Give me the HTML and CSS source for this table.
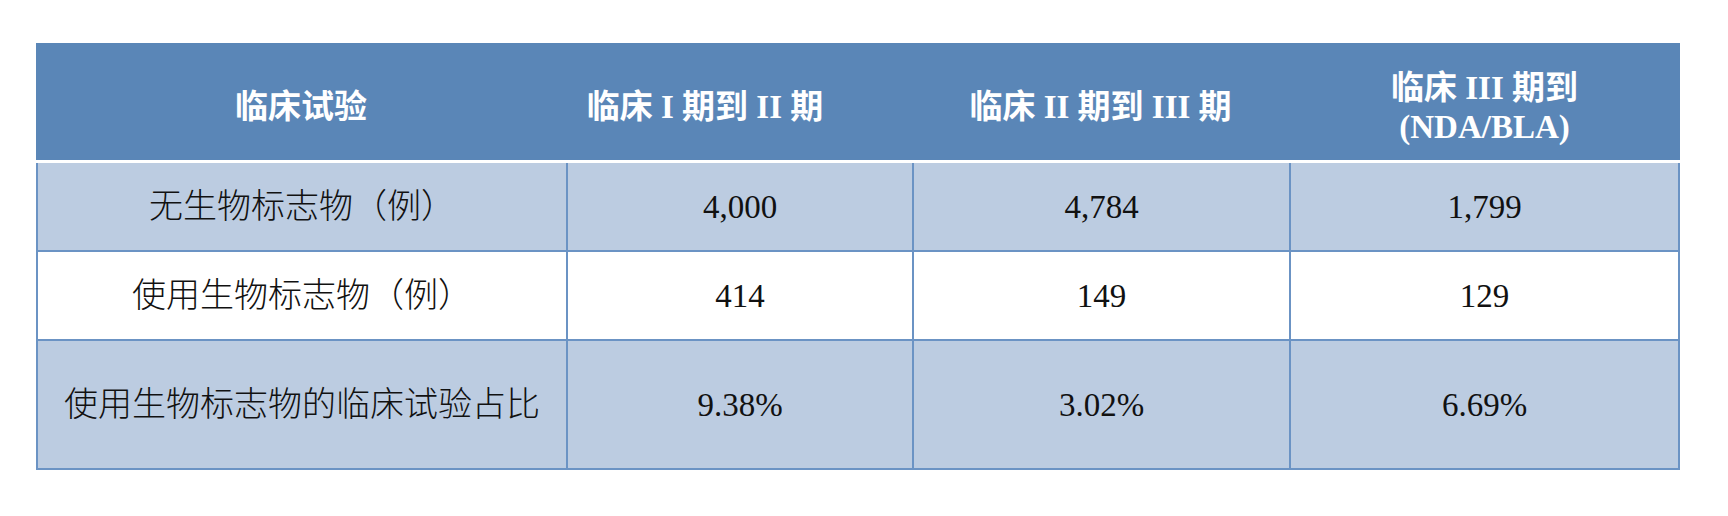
FILE: index.html
```html
<!DOCTYPE html>
<html lang="zh-CN">
<head>
<meta charset="utf-8">
<title>临床试验 生物标志物</title>
<link rel="stylesheet" href="styles.css">
</head>
<body>
<div class="table">
  <div class="head">
    <div class="hcell">临床试验</div>
    <div class="hcell shift">临床 I 期到 II 期</div>
    <div class="hcell">临床 II 期到 III 期</div>
    <div class="hcell two">临床 III 期到<br>(NDA/BLA)</div>
  </div>
  <div class="body">
    <div class="cell shade cn">无生物标志物（例）</div>
    <div class="cell shade">4,000</div>
    <div class="cell shade">4,784</div>
    <div class="cell shade">1,799</div>

    <div class="cell cn">使用生物标志物（例）</div>
    <div class="cell">414</div>
    <div class="cell">149</div>
    <div class="cell">129</div>

    <div class="cell shade cn">使用生物标志物的临床试验占比</div>
    <div class="cell shade">9.38%</div>
    <div class="cell shade">3.02%</div>
    <div class="cell shade">6.69%</div>
  </div>
</div>
</body>
</html>
```
FILE: styles.css
```css
html, body {
  margin: 0;
  padding: 0;
  background: #ffffff;
}

body {
  font-family: "Liberation Serif", "Noto Sans CJK SC", serif;
  color: #111111;
}

.table {
  width: 1644px;
  margin: 43px 0 0 36px;
}

.head {
  display: grid;
  grid-template-columns: 530px 346px 377px 391px;
  height: 117px;
  background: #5a86b7;
  border-bottom: 3px solid #ffffff;
}

.hcell {
  display: flex;
  align-items: center;
  justify-content: center;
  text-align: center;
  color: #ffffff;
  font-weight: 700;
  font-size: 33px;
  line-height: 39px;
  padding-top: 12px;
}

.hcell.shift {
  padding-right: 68px;
}

.body {
  display: grid;
  grid-template-columns: 528px 344px 375px 387px;
  grid-template-rows: 87px 87px 127px;
  gap: 2px;
  padding: 0 2px 2px 2px;
  background: #6b93c4;
}

.cell {
  display: flex;
  align-items: center;
  justify-content: center;
  background: #ffffff;
  font-size: 33px;
  line-height: 40px;
}

.cell.shade {
  background: #bccce1;
}

.cell.cn {
  font-size: 34px;
  font-weight: 300;
}
```
